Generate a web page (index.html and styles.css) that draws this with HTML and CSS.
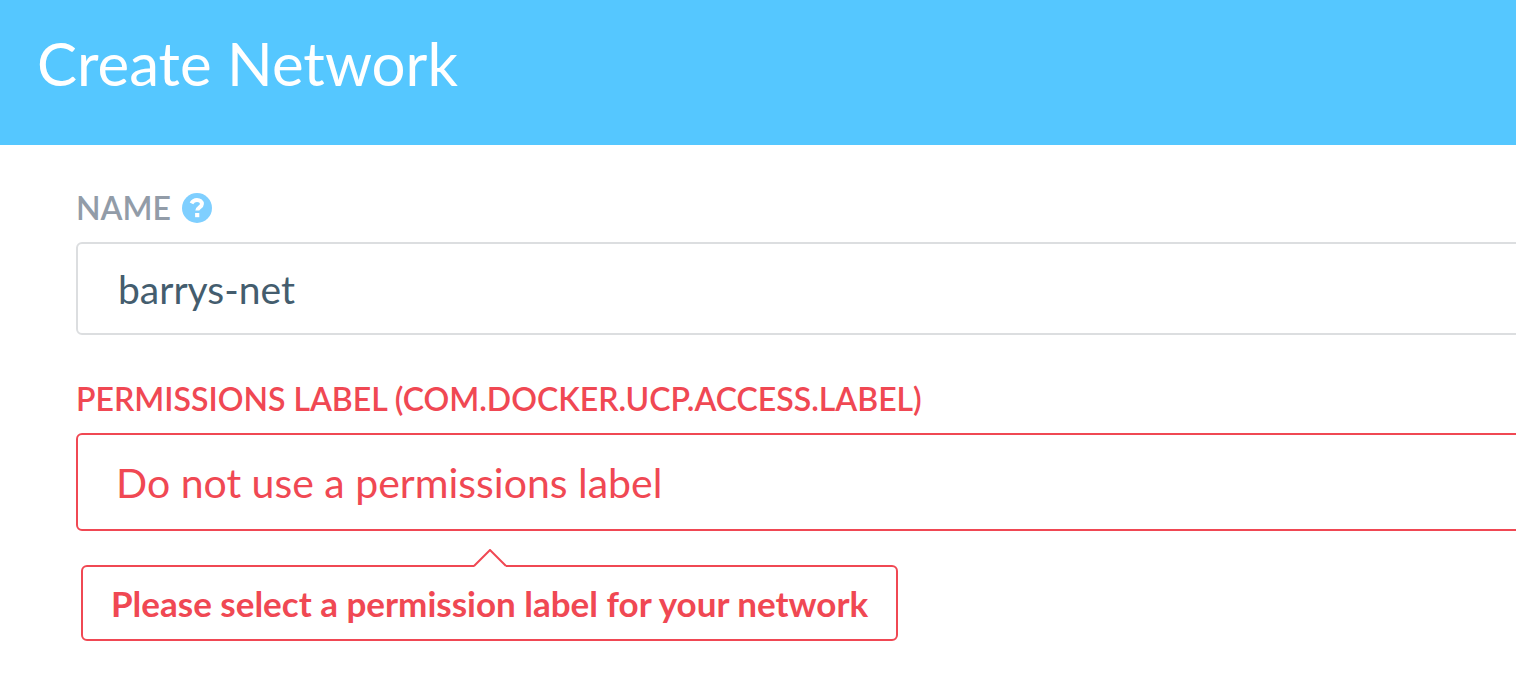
FILE: index.html
```html
<!DOCTYPE html>
<html lang="en">
<head>
<meta charset="utf-8">
<title>Create Network</title>
<link rel="stylesheet" href="styles.css">
</head>
<body>
<header class="header"><h1 class="title">Create Network</h1></header>
<main class="viewport">
<form class="form">
  <div class="field">
    <div class="label-row">
      <label class="label" for="name">NAME</label>
      <button class="help" type="button" aria-label="Help">
        <svg viewBox="0 0 30 30" width="30" height="30" aria-hidden="true"><circle cx="15" cy="15" r="15" fill="#7fcfff"/><path d="M9.5 10.4C10.8 7.8 12.6 6.9 15 6.9c2.8 0 4.9 1.7 4.9 4.1 0 3.4-4.6 3.4-4.6 6.6" fill="none" stroke="#fff" stroke-width="4"/><path d="M13.1 20h4.2v4.2h-4.2z" fill="#fff"/></svg>
      </button>
    </div>
    <input class="control" id="name" type="text" value="barrys-net">
  </div>
  <div class="field invalid">
    <label class="label" for="permissions">PERMISSIONS LABEL (COM.DOCKER.UCP.ACCESS.LABEL)</label>
    <select class="control select" id="permissions" aria-describedby="error"><option>Do not use a permissions label</option></select>
    <p class="error" id="error" role="alert">Please select a permission label for your network<svg class="arrow" viewBox="0 0 34 20" width="34" height="20" aria-hidden="true"><path d="M1 17 17 1l16 16v3H3z" fill="#fff"/><path d="M1 17 17 1l16 16" fill="none" stroke="#f04853" stroke-width="2"/></svg></p>
  </div>
</form>
</main>
</body>
</html>
```
FILE: styles.css
```css
* { box-sizing: border-box; }
body { margin: 0; background: #fff; font-family: Lato, "Open Sans", sans-serif; }
.header { background: #55c7ff; padding: 27px 37px 46px; }
.title { margin: 0; color: #fff; font-size: 60px; line-height: 72px; font-weight: 400; }
.viewport { overflow: hidden; }
.form { padding: 43px 0 32px 76px; margin-right: -8px; }
.field { display: flex; flex-direction: column; align-items: flex-start; margin-bottom: 44px; }
.label-row { display: flex; align-items: center; gap: 11px; }
.label { color: #929ca8; font-size: 32px; line-height: 40px; font-weight: 600; }
.label-row, .invalid > .label { margin-bottom: 14px; }
.help { display: flex; padding: 0; border: 0; background: none; }
.control { width: 100%; height: 93px; padding: 0 40px; border: 2px solid #dcdee0; border-radius: 6px; background: #fff; color: #445d6e; font: 400 39px Lato, "Open Sans", sans-serif; }
.select { height: 98px; padding: 0 38px; font-size: 41px; appearance: none; }
.invalid { margin: 0; }
.invalid .label, .invalid .control { color: #f04853; border-color: #f04853; }
.error { position: relative; margin: 34px 0 0 5px; padding: 16px 28px; border: 2px solid #f04853; border-radius: 6px; color: #f04853; font-size: 35px; line-height: 40px; font-weight: 700; }
.arrow { position: absolute; left: 50%; bottom: 100%; margin: 0 0 -2px -17px; }
```
